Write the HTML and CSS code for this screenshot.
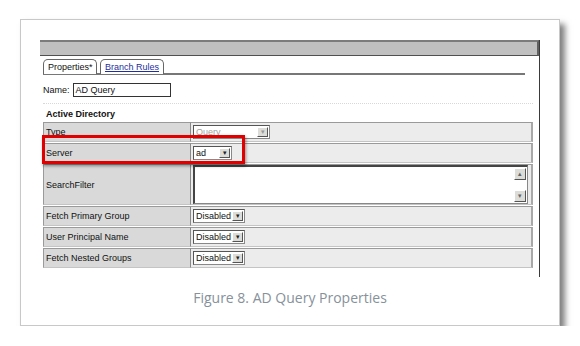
FILE: index.html
```html
<!DOCTYPE html>
<html lang="en">
<head>
<meta charset="UTF-8">
<meta name="viewport" content="width=device-width, initial-scale=1.0">
<title>AD Query Properties</title>
<link rel="stylesheet" href="styles.css">
</head>
<body>
    <div class="frame">
        <div class="shot">
            <div class="titlebar"></div>
            <div class="content">
                <div class="tabs">
                    <div class="tab active">Properties*</div>
                    <div class="tab"><a href="#">Branch Rules</a></div>
                </div>

                <div class="name-row">
                    <label>Name:</label>
                    <div class="name-input">AD Query</div>
                </div>
                <div class="dots"></div>

                <div class="section">Active Directory</div>
                <table class="props">
                    <tr>
                        <td class="label">Type</td>
                        <td class="value">
                            <div class="select disabled" style="width:77px"><span>Query</span><i class="btn">&#9662;</i></div>
                        </td>
                    </tr>
                    <tr>
                        <td class="label">Server</td>
                        <td class="value">
                            <div class="select" style="width:39px"><span>ad</span><i class="btn">&#9662;</i></div>
                        </td>
                    </tr>
                    <tr class="tall">
                        <td class="label">SearchFilter</td>
                        <td class="value">
                            <div class="textarea">
                                <div class="scroll">
                                    <i class="sbtn">&#9652;</i>
                                    <i class="sbtn">&#9662;</i>
                                </div>
                            </div>
                        </td>
                    </tr>
                    <tr>
                        <td class="label">Fetch Primary Group</td>
                        <td class="value">
                            <div class="select" style="width:52px"><span>Disabled</span><i class="btn">&#9662;</i></div>
                        </td>
                    </tr>
                    <tr>
                        <td class="label">User Principal Name</td>
                        <td class="value">
                            <div class="select" style="width:52px"><span>Disabled</span><i class="btn">&#9662;</i></div>
                        </td>
                    </tr>
                    <tr>
                        <td class="label">Fetch Nested Groups</td>
                        <td class="value">
                            <div class="select" style="width:52px"><span>Disabled</span><i class="btn">&#9662;</i></div>
                        </td>
                    </tr>
                </table>

                <!-- highlight drawn over the Server row -->
                <div class="highlight"></div>
            </div>
        </div>
        <div class="caption">Figure 8. AD Query Properties</div>
    </div>
</body>
</html>
```

FILE: styles.css
```css
body {
    margin: 0;
    background-color: #fff;
    font-family: "Liberation Sans", Arial, sans-serif;
}
.frame {
    margin: 19px 0 0 20px;
    width: 540px;
    height: 307px;
    box-sizing: border-box;
    border: 1px solid #c8c8c8;
    background-color: #fff;
    padding: 20px 0 0 19px;
    box-shadow: 5px 5px 6px rgba(0, 0, 0, 0.5);
}
.shot {
    width: 500px;
    height: 237px;
    box-sizing: border-box;
    border-right: 1px solid #3a3a3a;
}
.titlebar {
    height: 16px;
    box-sizing: border-box;
    background-color: #c0c0c0;
    border-top: 2px solid #7c7c7c;
    border-bottom: 1px solid #505050;
    border-right: 2px solid #606060;
}
.content {
    position: relative;
    padding: 3px 0 0 3px;
    font-size: 9px;
    color: #111;
}

/* Tabs */
.tabs {
    display: flex;
    gap: 3px;
    width: 482px;
    height: 16px;
    box-sizing: border-box;
    border-bottom: 2px solid #777;
}
.tab {
    height: 15px;
    line-height: 14px;
    box-sizing: border-box;
    padding: 0 4px;
    border: 1px solid #666;
    border-bottom: none;
    border-radius: 5px 5px 0 0;
    background-color: #fff;
}
.tab.active {
    width: 54px;
}
.tab a {
    color: #1f2f9e;
    font-size: 9px;
}

/* Name */
.name-row {
    display: flex;
    align-items: center;
    gap: 3px;
    margin-top: 8px;
    height: 14px;
}
.name-input {
    width: 98px;
    height: 14px;
    box-sizing: border-box;
    border: 1px solid #333;
    padding: 1px 2px;
    line-height: 11px;
}
.dots {
    width: 490px;
    margin-top: 6px;
    border-top: 1px dotted #d8d8d8;
}
.section {
    font-weight: bold;
    margin: 4px 0 0 3px;
    height: 13px;
    line-height: 13px;
}

/* Property table */
.props {
    width: 490px;
    border-collapse: separate;
    border-spacing: 0 1px;
}
.props td {
    height: 18px;
    padding: 0 2px;
    border-top: 1px solid #9a9a9a;
    border-bottom: 1px solid #c4c4c4;
}
.props tr.tall td {
    height: 39px;
}
.label {
    width: 142px;
    background-color: #d9d9d9;
    border-left: 1px solid #9a9a9a;
    border-right: 1px solid #8a8a8a;
}
.value {
    background-color: #ececec;
    border-right: 2px solid #a8a8a8;
}
.select {
    display: flex;
    align-items: center;
    justify-content: space-between;
    height: 14px;
    box-sizing: border-box;
    background-color: #fff;
    border: 1px solid #888;
    border-top-color: #555;
    border-left-color: #555;
    padding: 0 1px 0 2px;
}
.select.disabled span {
    color: #a0a0a0;
}
.btn,
.sbtn {
    display: block;
    width: 11px;
    height: 10px;
    box-sizing: border-box;
    background-color: #dcdcd8;
    border: 1px solid #fff;
    border-right-color: #555;
    border-bottom-color: #555;
    font-style: normal;
    font-size: 7px;
    line-height: 8px;
    text-align: center;
    color: #222;
}
.select.disabled .btn {
    color: #999;
}
.textarea {
    position: relative;
    height: 36px;
    margin-right: 1px;
    background-color: #fff;
    border: 1px solid #888;
    border-top: 2px solid #444;
    border-left: 2px solid #444;
}
.scroll {
    position: absolute;
    top: 1px;
    right: 1px;
    bottom: 1px;
    display: flex;
    flex-direction: column;
    justify-content: space-between;
}
.sbtn {
    width: 12px;
    height: 12px;
    line-height: 10px;
    color: #666;
}

.highlight {
    position: absolute;
    left: 2px;
    top: 79px;
    width: 203px;
    height: 29px;
    box-sizing: border-box;
    border: 3px solid #e00000;
    box-shadow: 1px 2px 3px rgba(0, 0, 0, 0.4);
}

.caption {
    margin-top: 11px;
    margin-left: -19px;
    text-align: center;
    font-family: "Open Sans", sans-serif;
    font-size: 14px;
    color: #86919b;
}
```
